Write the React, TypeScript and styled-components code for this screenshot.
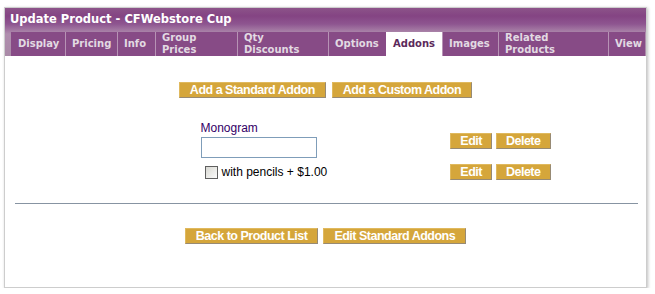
import React from 'react'
import styled, { createGlobalStyle } from 'styled-components'

const tabs = [
    { label: 'Display', width: 54 },
    { label: 'Pricing', width: 52 },
    { label: 'Info', width: 38 },
    { label: 'Group\nPrices', width: 82 },
    { label: 'Qty\nDiscounts', width: 91 },
    { label: 'Options', width: 58 },
    { label: 'Addons', width: 56, active: true },
    { label: 'Images', width: 56 },
    { label: 'Related\nProducts', width: 110 },
    { label: 'View', width: 37 },
]

const App: React.FC = () => {
    return (
        <Page>
            <GlobalStyle />
            <Panel>
                <Header>
                    <Title>Update Product - CFWebstore Cup</Title>
                    <TabRow>
                        {tabs.map((tab) => (
                            <Tab key={tab.label} active={!!tab.active} style={{ width: tab.width }}>
                                {tab.label}
                            </Tab>
                        ))}
                    </TabRow>
                </Header>
                <Content>
                    <ButtonRow gap={6}>
                        <GoldButton>Add a Standard Addon</GoldButton>
                        <GoldButton>Add a Custom Addon</GoldButton>
                    </ButtonRow>
                    <AddonGrid>
                        <Spacer />
                        <FieldCell>
                            <FieldLabel>Monogram</FieldLabel>
                            <TextInput type="text" />
                        </FieldCell>
                        <Actions>
                            <GoldButton compact>Edit</GoldButton>
                            <GoldButton compact>Delete</GoldButton>
                        </Actions>
                        <Spacer />
                        <CheckCell>
                            <CheckBox type="checkbox" />
                            <span>with pencils + $1.00</span>
                        </CheckCell>
                        <Actions>
                            <GoldButton compact>Edit</GoldButton>
                            <GoldButton compact>Delete</GoldButton>
                        </Actions>
                    </AddonGrid>
                    <Rule />
                    <ButtonRow gap={5}>
                        <GoldButton>Back to Product List</GoldButton>
                        <GoldButton>Edit Standard Addons</GoldButton>
                    </ButtonRow>
                </Content>
            </Panel>
        </Page>
    )
}

export default App

const GlobalStyle = createGlobalStyle`
    body {
        margin: 0;
        background: #fff;
        font-family: 'Liberation Sans', Arial, sans-serif;
    }
`

const Page = styled.div`
    padding: 7px 8px 0 4px;
    width: 655px;
    box-sizing: border-box;
`

const Panel = styled.div`
    width: 643px;
    height: 281px;
    box-sizing: border-box;
    border: 1px solid #cdcdcd;
    box-shadow: 1px 1px 3px rgba(0, 0, 0, 0.25);
    background: #fff;
`

const Header = styled.div`
    padding: 0 1px 0 6px;
    background: linear-gradient(to bottom, #8c5389 0px, #844483 8px, #8e5590 16px, #b08eae 26px, #a98aa7 48px);
`

const Title = styled.div`
    height: 24px;
    line-height: 23px;
    margin-left: -1px;
    color: #fff;
    font-family: 'DejaVu Sans', Verdana, sans-serif;
    font-weight: bold;
    font-size: 11.5px;
`

const TabRow = styled.div`
    display: flex;
    height: 24px;
`

const Tab = styled.div<{ active: boolean }>`
    display: flex;
    align-items: center;
    box-sizing: border-box;
    padding: 0 6px;
    white-space: pre-line;
    border-left: 1px solid ${({ active }) => (active ? '#fff' : '#b793b5')};
    background: ${({ active }) => (active ? '#fff' : '#874b86')};
    color: ${({ active }) => (active ? '#5c2a5b' : '#e2dae2')};
    font-family: 'DejaVu Sans', Verdana, sans-serif;
    font-weight: bold;
    font-size: 10px;
    line-height: 12px;

    &:first-child {
        border-left-color: #874b86;
    }
`

const Content = styled.div`
    padding-top: 26px;
`

const ButtonRow = styled.div<{ gap: number }>`
    display: flex;
    justify-content: center;
    gap: ${({ gap }) => gap}px;
`

const GoldButton = styled.button<{ compact?: boolean }>`
    height: 16px;
    padding: 0 ${({ compact }) => (compact ? 9 : 10)}px;
    border: 1px solid;
    border-color: #e0b95e #978a74 #978a74 #e0b95e;
    background: #d5a63b;
    color: #fff;
    font-family: 'Liberation Sans', Arial, sans-serif;
    font-weight: bold;
    font-size: 12.5px;
    letter-spacing: -0.5px;
    line-height: 14px;
    cursor: pointer;
`

const AddonGrid = styled.div`
    display: grid;
    grid-template-columns: 100px 200px 150px;
    grid-template-rows: 40px 21px;
    justify-content: center;
    align-items: center;
    margin-top: 23px;
`

const Spacer = styled.div``

const FieldCell = styled.div`
    display: flex;
    flex-direction: column;
    align-items: flex-start;
    padding-bottom: 3px;
`

const FieldLabel = styled.label`
    color: #330066;
    font-size: 12px;
    line-height: 15px;
    padding-bottom: 1px;
`

const TextInput = styled.input`
    width: 116px;
    height: 21px;
    box-sizing: border-box;
    border: 1px solid #7f9db9;
    margin: 0;
    padding: 1px 3px;
`

const CheckCell = styled.div`
    display: flex;
    align-items: center;
    font-size: 12px;
    color: #000;
`

const CheckBox = styled.input`
    appearance: none;
    width: 13px;
    height: 13px;
    margin: 1px 4px 0 4px;
    border: 1px solid #5f5f5f;
    background: linear-gradient(135deg, #d8d8d2, #fbfbfb);
`

const Actions = styled.div`
    display: flex;
    justify-content: flex-end;
    gap: 4px;
`

const Rule = styled.div`
    height: 1px;
    margin: 21px 8px 24px 10px;
    background: #8794a2;
`
